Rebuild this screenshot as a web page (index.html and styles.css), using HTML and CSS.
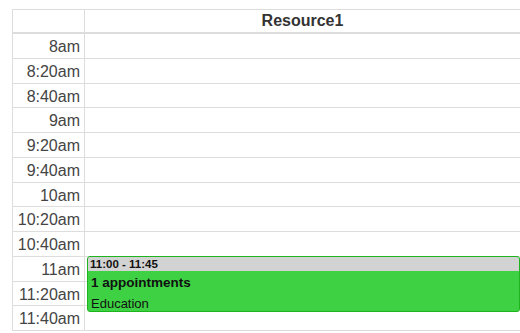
FILE: index.html
```html
<!DOCTYPE html>
<html lang="en">

<head>
    <meta charset="UTF-8">
    <title>Scheduler</title>
    <link rel="stylesheet" href="styles.css">
</head>

<body>
    <div class="scheduler">
        <div class="header">
            <div class="corner"></div>
            <div class="resource">Resource1</div>
        </div>

        <div class="grid">
            <div class="times">
                <div class="slot">8am</div>
                <div class="slot">8:20am</div>
                <div class="slot">8:40am</div>
                <div class="slot">9am</div>
                <div class="slot">9:20am</div>
                <div class="slot">9:40am</div>
                <div class="slot">10am</div>
                <div class="slot">10:20am</div>
                <div class="slot">10:40am</div>
                <div class="slot">11am</div>
                <div class="slot">11:20am</div>
                <div class="slot">11:40am</div>
            </div>
            <div class="column">
                <div class="cell"></div>
                <div class="cell"></div>
                <div class="cell"></div>
                <div class="cell"></div>
                <div class="cell"></div>
                <div class="cell"></div>
                <div class="cell"></div>
                <div class="cell"></div>
                <div class="cell"></div>
                <div class="cell"></div>
                <div class="cell"></div>
                <div class="cell"></div>

                <div class="event">
                    <div class="event-time">11:00 - 11:45</div>
                    <div class="event-title">1 appointments</div>
                    <div class="event-text">Education</div>
                </div>
            </div>
        </div>
    </div>
</body>

</html>
```

FILE: styles.css
```css
body {
    font-family: "Liberation Sans", Arial, sans-serif;
    color: #333;
    background-color: #fff;
    margin: 0;
    padding: 9px 0 0 12px;
    overflow: hidden;
}

.scheduler {
    border-top: 1px solid #ddd;
    border-left: 1px solid #ddd;
}

.header {
    display: grid;
    grid-template-columns: 72px 1fr;
    height: 24px;
    box-sizing: border-box;
    border-bottom: 2px solid #ddd;
}

.corner {
    border-right: 1px solid #ddd;
}

.resource {
    font-size: 16px;
    font-weight: bold;
    text-align: center;
    line-height: 22px;
    color: #333;
}

.grid {
    display: grid;
    grid-template-columns: 72px 1fr;
}

.times {
    border-right: 1px solid #ddd;
}

.slot,
.cell {
    height: 24.75px;
    box-sizing: border-box;
    border-bottom: 1px solid #ddd;
}

.slot {
    font-size: 16px;
    color: #444;
    text-align: right;
    padding-right: 4px;
    line-height: 25px;
}

.column {
    position: relative;
}

.event {
    position: absolute;
    top: 222px;
    left: 2px;
    right: 0;
    height: 56px;
    box-sizing: border-box;
    border: 1px solid #1db41d;
    border-radius: 3px;
    background-color: #3dd143;
    color: #111;
    overflow: hidden;
}

.event-time {
    background-color: #d3d3d3;
    font-size: 11.5px;
    font-weight: bold;
    height: 14px;
    line-height: 15px;
    padding-left: 2px;
}

.event-title {
    font-size: 13.5px;
    font-weight: bold;
    padding: 3px 3px 0;
    line-height: 18px;
}

.event-text {
    font-size: 13px;
    padding: 4px 3px 0;
    line-height: 16px;
}
```
